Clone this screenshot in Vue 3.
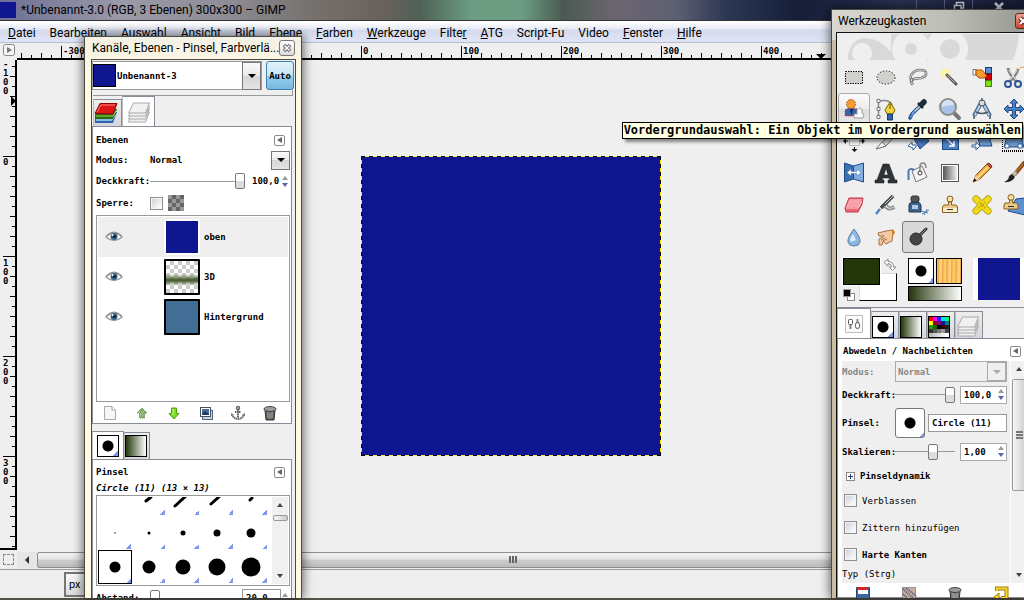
<template>
  <div class="desktop">
    <main class="image-window">
      <header class="window-title">
        <span class="window-thumb"></span>
        <h1>*Unbenannt-3.0 (RGB, 3 Ebenen) 300x300 – GIMP</h1>
        <div class="window-controls">
          <button type="button" aria-label="Minimieren"></button>
          <button type="button" aria-label="Wiederherstellen">
            <svg viewBox="0 0 12 10" width="12" height="10"><path d="M3.500 5V2.500H10.500V8H8M1.500 5.500H8V10H1.500Z" fill="none" stroke="#c8ccd6" stroke-width="1.500" /></svg>
          </button>
          <button type="button" aria-label="Schließen">
            <svg viewBox="0 0 12 10" width="12" height="10"><path d="M2 3L10 11M10 3L2 11" stroke="#c8ccd6" stroke-width="2.500" /></svg>
          </button>
        </div>
      </header>

      <nav class="menubar">
        <a v-for="item in menu" :key="item.text" href="#">{{ item.text.slice(0, item.key) }}<u>{{ item.text.slice(item.key, item.key + 1) }}</u>{{ item.text.slice(item.key + 1) }}</a>
      </nav>

      <div class="ruler-row">
        <button type="button" class="corner" aria-label="Bildmenü">
          <svg viewBox="0 0 12 12" width="12" height="12"><rect x=".5" y=".5" width="11" height="11" rx="2" fill="#f4f4f4" stroke="#888" /><path d="M4 3L9 6L4 9Z" fill="#777" /></svg>
        </button>
        <svg class="ruler-top" height="17">
          <path :d="topTicks" stroke="#000" />
          <path d="M0 16H3000" stroke="#000" stroke-width="2" />
          <path d="M799 11H809L804 16Z" />
          <text v-for="n in topLabels" :key="n" :x="n + 346" y="11">{{ n }}</text>
        </svg>
      </div>

      <div class="canvas-row">
        <svg class="ruler-left" width="17">
          <path :d="leftTicks" stroke="#000" />
          <path d="M16 0V3000" stroke="#000" stroke-width="2" />
          <path d="M11 36V46L16 41Z" />
          <template v-for="label in leftLabels" :key="label.y">
            <text v-for="(c, i) in label.chars" :key="i" x="3" :y="label.y + i * 9">{{ c }}</text>
          </template>
        </svg>
        <div class="canvas">
          <div class="picture"></div>
        </div>
      </div>

      <div class="scroll-row">
        <button type="button" class="quick-mask" aria-label="Schnellmaske"></button>
        <button type="button" class="scroll-arrow" aria-label="Nach links">
          <svg viewBox="0 0 6 8" width="6" height="8"><path d="M5 0V8L1 4Z" fill="#333" /></svg>
        </button>
        <div class="scroll-bar"><i></i><i></i><i></i></div>
      </div>
      <footer class="status">
        <select class="unit" aria-label="Einheit"><option>px</option></select>
      </footer>
    </main>

    <section class="dock layers-dock">
      <header class="dock-title">
        <h2>Kanäle, Ebenen - Pinsel, Farbverlä...</h2>
        <button type="button" class="dock-close" aria-label="Dock schließen">
          <svg viewBox="0 0 10 10" width="10" height="10"><path d="M2 2L8 8M8 2L2 8" stroke="#666" stroke-width="3.500" /><path d="M2.500 2.500L7.500 7.500M7.500 2.500L2.500 7.500" stroke="#fff" stroke-width="1.500" /></svg>
        </button>
      </header>
      <div class="dock-body">
        <div class="image-row">
          <div class="image-pick">
            <span class="image-swatch"></span>
            <select aria-label="Bild"><option>Unbenannt-3</option></select>
            <span class="drop tall"></span>
          </div>
          <button type="button" class="auto">Auto</button>
        </div>
        <div class="divider"></div>

        <div class="tabs">
          <button type="button" class="tab" aria-label="Kanäle">
            <svg viewBox="0 0 24 24" width="24" height="24">
              <path d="M1 17L5 11H23L19 22H1Z" fill="#2f62ac" /><path d="M2 18L6 14H22L18 20H2Z" fill="#8ab8e8" />
              <path d="M1 14L5 8H23L19 18H1Z" fill="#2e6d12" /><path d="M2 15H19L22 10" fill="none" stroke="#8cdc50" />
              <path d="M1 12.500L6 2.500H23L19 13Z" fill="#dd1717" stroke="#8c0505" /><path d="M3 11L7 4H21" fill="none" stroke="#ff8080" />
            </svg>
          </button>
          <button type="button" class="tab on" aria-label="Ebenen">
            <svg viewBox="0 0 24 24" width="24" height="24" v-html="layersArt"></svg>
          </button>
        </div>

        <div class="panel layers-panel">
          <div class="panel-head"><h3>Ebenen</h3><button type="button" class="tri" aria-label="Reiter konfigurieren"></button></div>
          <div class="form-row mode-row">
            <label for="layer-mode">Modus:</label>
            <select id="layer-mode"><option>Normal</option></select>
            <span class="drop"></span>
          </div>
          <div class="form-row">
            <label for="layer-opacity">Deckkraft:</label>
            <input id="layer-opacity" type="range" value="100" />
            <input class="bare" type="text" value="100,0" aria-label="Deckkraft in Prozent" />
            <span class="spin"></span>
          </div>
          <div class="form-row">
            <label for="layer-lock">Sperre:</label>
            <input id="layer-lock" type="checkbox" />
            <span class="alpha"></span>
          </div>
          <ul class="layer-list">
            <li v-for="layer in layers" :key="layer.name" :class="{ selected: layer.selected }">
              <svg viewBox="0 0 18 12" width="18" height="12">
                <path d="M1 6Q9 -2 17 6Q9 13 1 6Z" fill="#fff" stroke="#9b9b96" stroke-width="1.500" />
                <circle cx="9" cy="5.500" r="3.500" fill="#3b5f8c" /><circle cx="9.500" cy="5.500" r="1.500" fill="#101c30" /><circle cx="7.500" cy="4" r="1" fill="#fff" />
                <path d="M1 5Q9 -3 17 5" fill="none" stroke="#8b8b88" />
              </svg>
              <span :class="['thumb', layer.kind]"></span>
              <span>{{ layer.name }}</span>
            </li>
          </ul>
          <div class="actions">
            <button v-for="action in actions" :key="action.name" type="button" :aria-label="action.name">
              <svg viewBox="0 0 16 16" width="16" height="16" v-html="action.art"></svg>
            </button>
          </div>
        </div>

        <div class="tabs brush-tabs">
          <button type="button" class="tab on" aria-label="Pinsel"><span class="brush-icon"></span></button>
          <button type="button" class="tab" aria-label="Farbverläufe"><span class="gradient-icon"></span></button>
        </div>

        <div class="panel brush-panel">
          <div class="panel-head"><h3>Pinsel</h3><button type="button" class="tri" aria-label="Reiter konfigurieren"></button></div>
          <p class="brush-name">Circle (11) (13 × 13)</p>
          <div class="brush-box">
            <div class="brush-grid">
              <button v-for="(brush, i) in brushes" :key="i" type="button" :class="{ chosen: i === 10, plain: i === 0 }" :aria-label="'Pinsel ' + (i + 1)">
                <svg viewBox="0 0 34 34" width="34" height="34">
                  <path v-if="brush.line" :d="brush.line" stroke="#000" :stroke-width="brush.size" stroke-linecap="round" />
                  <circle v-else cx="17" cy="17" :r="brush.size" />
                </svg>
              </button>
            </div>
            <div class="vscroll">
              <span class="arrow-up"></span><span class="vthumb"></span><span class="arrow-down"></span>
            </div>
          </div>
          <div class="form-row spacing-row">
            <label for="spacing">Abstand:</label>
            <input id="spacing" type="range" value="0" />
            <input class="entry" type="text" value="20,0" aria-label="Abstand" />
            <span class="spin"></span>
          </div>
        </div>
      </div>
    </section>

    <section class="dock toolbox">
      <header class="dock-title">
        <h2>Werkzeugkasten</h2>
        <button type="button" class="dock-close red" aria-label="Werkzeugkasten schließen">
          <svg viewBox="0 0 10 10" width="10" height="10"><path d="M2 2L8 8M8 2L2 8" stroke="#5c2020" stroke-width="4" /><path d="M2 2L8 8M8 2L2 8" stroke="#fff" stroke-width="2" /></svg>
        </button>
      </header>
      <div class="dock-body">
        <svg class="wilber" viewBox="0 0 187 27" width="187" height="27">
          <path d="M11 27A17 20 0 0 1 29 5Q44 6 54 19V1H182Q181 15 176 27Z" fill="#d9d9d9" />
          <circle cx="25" cy="20" r="10" fill="#efefef" />
          <circle cx="74" cy="16" r="19" fill="#efefef" /><circle cx="74" cy="16" r="6" fill="#d9d9d9" />
          <circle cx="110" cy="16" r="21" fill="#efefef" /><circle cx="113" cy="16" r="10" fill="#d9d9d9" />
        </svg>
        <div class="tools">
          <button v-for="tool in tools" :key="tool.name" type="button" :class="tool.state" :aria-label="tool.name">
            <svg viewBox="0 0 24 24" width="24" height="24" v-html="tool.art"></svg>
          </button>
        </div>

        <div class="indicators">
          <div class="colors">
            <button type="button" class="background" aria-label="Hintergrundfarbe"></button>
            <button type="button" class="foreground" aria-label="Vordergrundfarbe"></button>
            <svg class="swap" viewBox="0 0 14 14" width="14" height="14"><path d="M1 4.500L5 1V3.500Q10.500 3.500 10.500 9H13L9.500 12.500L6 9H8.500Q8.500 5.500 5 5.500V8Z" fill="#fff" stroke="#888" /></svg>
            <svg class="reset" viewBox="0 0 12 12" width="12" height="12"><rect x="4.500" y="4.500" width="7" height="7" fill="#fff" stroke="#888" /><rect x=".5" y=".5" width="7" height="7" fill="#000" stroke="#999" /></svg>
          </div>
          <div class="resources">
            <button type="button" class="brush-icon" aria-label="Pinsel"></button>
            <button type="button" class="pattern" aria-label="Muster"></button>
            <button type="button" class="gradient" aria-label="Farbverlauf"></button>
          </div>
          <button type="button" class="active-image" aria-label="Aktives Bild"></button>
        </div>

        <div class="tabs tool-tabs">
          <button type="button" class="tab on" aria-label="Werkzeugeinstellungen">
            <svg viewBox="0 0 24 24" width="24" height="24"><path d="M3.500 3.500H20.500V20.500H3.500Z" fill="#fafafa" stroke="#bbb" /><rect x="6.500" y="7.500" width="4" height="5" rx="1" fill="#fff" stroke="#555" /><path d="M8.500 13V17M15.500 7V11" stroke="#888" stroke-width="2" /><rect x="13.500" y="10.500" width="4" height="6" rx="2" fill="#fff" stroke="#555" /></svg>
          </button>
          <button type="button" class="tab" aria-label="Pinsel"><span class="brush-icon"></span></button>
          <button type="button" class="tab" aria-label="Farbverläufe"><span class="gradient-icon"></span></button>
          <button type="button" class="tab" aria-label="Paletten">
            <svg viewBox="0 0 22 22" width="22" height="22">
              <rect width="22" height="22" fill="#000" />
              <rect v-for="(c, i) in palette" :key="i" :x="1 + (i % 5) * 4" :y="1 + Math.floor(i / 5) * 4" width="4" height="4" :fill="c" />
            </svg>
          </button>
          <button type="button" class="tab" aria-label="Ebenen"><svg viewBox="0 0 24 24" width="24" height="24" v-html="layersArt"></svg></button>
        </div>

        <div class="panel options-panel">
          <div class="panel-head"><h3>Abwedeln / Nachbelichten</h3><button type="button" class="tri" aria-label="Reiter konfigurieren"></button></div>
          <div class="options-area">
            <div class="options">
              <div class="opt-row">
                <label for="tool-mode" class="off">Modus:</label>
                <span class="select-wrap"><select id="tool-mode" disabled><option>Normal</option></select><span class="drop faded"></span></span>
              </div>
              <div class="opt-row">
                <label for="tool-opacity">Deckkraft:</label>
                <input id="tool-opacity" type="range" value="100" />
                <span class="entry-wrap"><input type="text" value="100,0" aria-label="Deckkraft in Prozent" /><span class="spin"></span></span>
              </div>
              <div class="opt-row big">
                <label for="tool-brush">Pinsel:</label>
                <button type="button" class="brush-button" aria-label="Pinsel wählen"></button>
                <input id="tool-brush" class="entry" type="text" value="Circle (11)" />
              </div>
              <div class="opt-row">
                <label for="tool-scale">Skalieren:</label>
                <input id="tool-scale" type="range" value="65" />
                <span class="entry-wrap"><input type="text" value="1,00" aria-label="Skalierungsfaktor" /><span class="spin"></span></span>
              </div>
              <button type="button" class="expander"><span class="plus"></span>Pinseldynamik</button>
              <label class="check-row thin"><input type="checkbox" />Verblassen</label>
              <label class="check-row thin"><input type="checkbox" />Zittern hinzufügen</label>
              <label class="check-row"><input type="checkbox" />Harte Kanten</label>
              <p class="thin">Typ (Strg)</p>
            </div>
            <div class="vscroll options-scroll">
              <span class="arrow-up"></span><span class="vthumb"><i></i><i></i><i></i></span><span class="arrow-down"></span>
            </div>
          </div>
          <div class="option-actions">
            <button v-for="action in optionActions" :key="action.name" type="button" :aria-label="action.name">
              <svg viewBox="0 0 16 16" width="16" height="16" v-html="action.art"></svg>
            </button>
          </div>
        </div>
      </div>
    </section>

    <div class="tooltip" role="tooltip">Vordergrundauswahl: Ein Objekt im Vordergrund auswählen</div>
  </div>
</template>

<script setup>
import { ref } from 'vue';

const menu = [
  { text: 'Datei', key: 0 },
  { text: 'Bearbeiten', key: 6 },
  { text: 'Auswahl', key: 0 },
  { text: 'Ansicht', key: 0 },
  { text: 'Bild', key: 0 },
  { text: 'Ebene', key: 0 },
  { text: 'Farben', key: 0 },
  { text: 'Werkzeuge', key: 0 },
  { text: 'Filter', key: 5 },
  { text: 'ATG', key: 0 },
  { text: 'Script-Fu', key: 9 },
  { text: 'Video', key: 9 },
  { text: 'Fenster', key: 0 },
  { text: 'Hilfe', key: 0 },
];

// ruler ticks every 10 units, full height on each hundred
const tickSize = (n) => (n % 100 === 0 ? 13 : n % 20 === 0 ? 6 : 4);
const topLabels = [-300, -200, -100, 0, 100, 200, 300, 400, 500];
let topTicks = '';
for (let n = -340; n <= 2000; n += 10) {
  topTicks += `M${n + 344}.5 16v-${tickSize(n)}`;
}
let leftTicks = '';
for (let n = -90; n <= 1200; n += 10) {
  leftTicks += `M16 ${n + 96}.5h-${tickSize(n)}`;
}
const leftLabels = [
  { y: 7, chars: ['-', '1', '0', '0'] },
  { y: 105, chars: ['0'] },
  { y: 206, chars: ['1', '0', '0'] },
  { y: 306, chars: ['2', '0', '0'] },
  { y: 406, chars: ['3', '0', '0'] },
];

const layers = ref([
  { name: 'oben', kind: 'blue', selected: true },
  { name: '3D', kind: 'blur', selected: false },
  { name: 'Hintergrund', kind: 'steel', selected: false },
]);

const layersArt = [17, 14, 11, 8]
  .map((y) => `<path d="M1.500 ${y + 5}L6.500 ${y - 5}H22.500L18.500 ${y + 5}Z" fill="#f1f1f1" stroke="#a9a9a9"/>`)
  .join('');

const trash = (c) => `<path d="M3 5L4 15H12L13 5Z" fill="${c}" stroke="#333"/><ellipse cx="8" cy="4" rx="6" ry="2.500" fill="#9a9d98" stroke="#444"/><path d="M6 7V13M8 8V14M10 7V13" stroke="#aaa"/>`;

const actions = [
  { name: 'Neue Ebene', art: '<path d="M2.500 1.500H10L13.500 5V14.500H2.500Z" fill="#f6f6f6" stroke="#a8a8a8"/><path d="M10 1.500V5H13.500" fill="#fff" stroke="#a8a8a8"/>' },
  { name: 'Ebene anheben', art: '<path d="M8 3L13 8H10.500V13H5.500V8H3Z" fill="#7fa966" stroke="#55803c" stroke-dasharray="1 1"/><path d="M5 7H11M6 9H10M6 11H10" stroke="#c3dcb5" stroke-dasharray="1 1"/>' },
  { name: 'Ebene absenken', art: '<path d="M8 14L13 8.500H10.500V3H5.500V8.500H3Z" fill="#7ddc2b" stroke="#4ba010"/><path d="M7 4V10" stroke="#c2f58f"/>' },
  { name: 'Ebene duplizieren', art: '<rect x="4.500" y="5.500" width="10" height="9" fill="#c9d3df" stroke="#53657c"/><rect x="2.500" y="2.500" width="10" height="9" fill="#fff" stroke="#44505f"/><rect x="4" y="4" width="7" height="6" fill="#4a6f9e"/><path d="M4 9L7 6L11 9V10H4Z" fill="#1d3a5f"/>' },
  { name: 'Ebene verankern', art: '<circle cx="8" cy="3" r="1.500" fill="none" stroke="#666" stroke-width="1.500"/><path d="M8 5V13M5 7H11M2 9Q3 13.500 8 14Q13 13.500 14 9" fill="none" stroke="#666" stroke-width="2" stroke-dasharray="1.500 .5"/><path d="M1 11V8L4 10M15 11V8L12 10" fill="#777"/>' },
  { name: 'Ebene löschen', art: trash('#5d605b') },
];

const optionActions = [
  { name: 'Einstellungen speichern', art: '<path d="M1.500 1.500H14.500V15H1.500Z" fill="#3c669f" stroke="#26456f"/><rect x="3" y="2" width="10" height="6" fill="#fff"/><rect x="3" y="1" width="10" height="3" fill="#dc2222"/>' },
  { name: 'Einstellungen laden', art: '<path d="M1.500 1.500H14.500V15H1.500Z" fill="#c6aea0" stroke="#555" stroke-dasharray="1 1"/><path d="M2 3L14 14M5 2L15 10M2 8L9 15" stroke="#557" stroke-width="2" stroke-dasharray="1 1"/>' },
  { name: 'Einstellungen löschen', art: trash('#777') },
  { name: 'Zurücksetzen', art: '<path d="M4 5V2.500H13.500V12H8" fill="none" stroke="#9c7c00" stroke-width="4"/><path d="M4 5V2.500H13.500V12H8" fill="none" stroke="#f5d731" stroke-width="2"/><path d="M1 11L6 7V15Z" fill="#f5d731" stroke="#9c7c00"/>' },
];

const brushes = [
  { size: 0 },
  { line: 'M14 19L19 15', size: 3 },
  { line: 'M9 24L21 13', size: 3 },
  { line: 'M11 22L20 14', size: 3 },
  { line: 'M16 18L18 16', size: 3 },
  { size: 0.7 },
  { size: 1.5 },
  { size: 2.5 },
  { size: 3.5 },
  { size: 4.5 },
  { size: 5.5 },
  { size: 6.5 },
  { size: 7.5 },
  { size: 8.5 },
  { size: 9.5 },
];

const palette = [
  '#ff0000', '#ff00ff', '#2020ff', '#00e0ff', '#00ff60',
  '#ffff00', '#900020', '#800080', '#101090', '#008080',
  '#20a000', '#206000', '#000000', '#300000', '#202020',
  '#303030', '#555555', '#777777', '#999999', '#444444',
  '#bbbbbb', '#cccccc', '#dddddd', '#eeeeee', '#ffffff',
];

const tools = [
  { name: 'Rechteckige Auswahl', art: '<rect x="4" y="7" width="16" height="12" fill="#cfd2cc"/><rect x="3.500" y="6.500" width="17" height="12" fill="none" stroke="#fff"/><rect x="3.500" y="6.500" width="17" height="12" fill="none" stroke="#000" stroke-dasharray="1.500 1"/>' },
  { name: 'Elliptische Auswahl', art: '<ellipse cx="12" cy="12.500" rx="9" ry="6.500" fill="#cfd2cc" stroke="#fff"/><ellipse cx="12" cy="12.500" rx="9" ry="6.500" fill="none" stroke="#000" stroke-dasharray="1.500 1.500"/>' },
  { name: 'Freie Auswahl', art: '<path d="M6 15C2 11 8 5 14 5C22 5 22 11 15 13C10 14 6 13 5 17L7 20" fill="none" stroke="#71736e" stroke-width="2.500"/><path d="M6 15C2 11 8 5 14 5C22 5 22 11 15 13C10 14 6 13 5 17L7 20" fill="none" stroke="#e0e0dc"/><circle cx="5.500" cy="15" r="1.500" fill="#ddd" stroke="#666"/>' },
  { name: 'Zauberstab', art: '<circle cx="7" cy="8" r="4.500" fill="#fff27a" opacity=".7"/><circle cx="7" cy="8" r="2" fill="#fffbd0"/><path d="M9 10L18 19" stroke="#555" stroke-width="3" stroke-linecap="round"/><path d="M9 10L17 18" stroke="#b9bdb5"/>' },
  { name: 'Nach Farbe auswählen', art: '<rect x="15.500" y="2.500" width="6" height="6" fill="#5b8fd5" stroke="#173a6b"/><rect x="15.500" y="9" width="6" height="6" fill="#d40000" stroke="#7a0000"/><rect x="15.500" y="15.500" width="6" height="6" fill="#7fe01a" stroke="#3e8208"/><path d="M3 4.500H6V10H3Z" fill="#fff" stroke="#777"/><path d="M6 5H12L17 11L14 13H9L6 10Z" fill="#f89b32" stroke="#a85400"/>' },
  { name: 'Magnetische Schere', art: '<path d="M6 3Q7 9 15 17M16 4Q15 9 7 17" fill="none" stroke="#858783" stroke-width="3"/><path d="M7 5L14 15M15 5L8 15" stroke="#eee"/><circle cx="6" cy="19" r="3" fill="none" stroke="#2e5995" stroke-width="2"/><circle cx="16" cy="19" r="3" fill="none" stroke="#2e5995" stroke-width="2"/><path d="M16 5Q16 2 24 2" fill="none" stroke="#e58000" stroke-dasharray="2 1"/>' },
  { name: 'Vordergrundauswahl', state: 'hover', art: '<path d="M3 19V13L8 10L15 12V19Z" fill="#3465a4" stroke="#c04050" stroke-dasharray="1 1"/><circle cx="9" cy="7" r="4.500" fill="#f59b35" stroke="#a34d00" stroke-dasharray="1.500 1"/><path d="M8 12L9.500 18L11 12Z" fill="#202060"/><path d="M12 21Q11 16 15 17V13Q18 9 20 13V16Q23 17 21 21Z" fill="#fafafa" stroke="#999"/>' },
  { name: 'Pfade', art: '<path d="M4.500 3V21M5 4Q16 2 18 8" fill="none" stroke="#888" stroke-width="1.500"/><path d="M3 2.500H6V5.500H3ZM3 10.500H6V13.500H3ZM3 18.500H6V21.500H3Z" fill="#fff" stroke="#777"/><path d="M16 5L21 13L19 17H13L11 13Z" fill="#f5d63f" stroke="#806000"/><path d="M16 7V12" stroke="#604800"/><path d="M13.500 17H18.500V23H13.500Z" fill="#2f65b0" stroke="#173c74"/>' },
  { name: 'Farbpipette', art: '<path d="M14 9L6 17L4 21" fill="none" stroke="#1e477b" stroke-width="3.500" stroke-linecap="round"/><path d="M14 9L6 17" stroke="#d9e6f2" stroke-width="1.500"/><path d="M9 14L4 21" stroke="#5b97dd" stroke-width="1.500"/><path d="M12 6L17 11" stroke="#222" stroke-width="2.500"/><path d="M16 7L18 5" stroke="#1e2b3b" stroke-width="5.500" stroke-linecap="round"/>' },
  { name: 'Vergrößerung', art: '<path d="M15 15L21 21" stroke="#777974" stroke-width="4" stroke-linecap="round"/><circle cx="10" cy="10" r="8" fill="#a7c4e8" stroke="#8b8e89" stroke-width="2"/><path d="M4 10A6 6 0 0 1 16 8Q10 8 4 10Z" fill="#d5e4f6"/>' },
  { name: 'Maßband', art: '<path d="M11 6L4 19M13 6L20 19" stroke="#3d5f88" stroke-width="4"/><path d="M11 6L4 20M13 6L20 20" stroke="#b9cfe6" stroke-width="2"/><circle cx="12" cy="6" r="3" fill="#d7dbe0" stroke="#4c5866"/><path d="M12 1V4M6 15Q12 18 18 15M4 18V22M20 18V22" fill="none" stroke="#4c5866" stroke-width="1.500"/>' },
  { name: 'Verschieben', art: '<path d="M12 2L16 6H13.500V10.500H18V8L22 12L18 16V13.500H13.500V18H16L12 22L8 18H10.500V13.500H6V16L2 12L6 8V10.500H10.500V6H8Z" fill="#4a82c8" stroke="#1e477b"/>' },
  { name: 'Ausrichten', art: '<path d="M7.500 5.500H17.500V16.500H7.500Z" fill="#f4f4f4" stroke="#bbb"/><path d="M1 12L4 9V11.500H6V12.500H4V15ZM23 12L20 9V11.500H18V12.500H20V15ZM12.500 23L9.500 20H12V18H13V20H15.500Z" fill="#111"/>' },
  { name: 'Zuschneiden', art: '<path d="M2 20L18 3L22 6L12 17Z" fill="#d4d6d1" stroke="#6b6e69"/><path d="M2 20L8 13L12 17Z" fill="#fff" stroke="#777"/>' },
  { name: 'Drehen', art: '<path d="M8 10L17 3L23 12L14 20Z" fill="#4679ba" stroke="#204a87"/><path d="M2 17L6 13V16H10V18L7 21V19Z" fill="#fff" stroke="#315f9e"/>' },
  { name: 'Skalieren', art: '<rect x="4.500" y="4.500" width="16" height="16" fill="#4c80c0" stroke="#204a87"/><path d="M8 9L16 17M16 12V17H11" fill="none" stroke="#fff" stroke-width="1.500"/>' },
  { name: 'Scheren', art: '<path d="M7 4H18L22 17H10Z" fill="#6c9bd0" stroke="#204a87"/><path d="M2 16H6V13L10 17L6 21V18H2Z" fill="#fff" stroke="#315f9e"/>' },
  { name: 'Perspektive', art: '<path d="M6 4H18L22 18H2Z" fill="#6c9bd0" stroke="#204a87"/><path d="M0 22H24M0 11V22" stroke="#000" stroke-width="2" stroke-dasharray="1 1"/><path d="M3 15H7V19H3ZM16 15H20V19H16Z" fill="#fff" stroke="#315f9e"/>' },
  { name: 'Spiegeln', art: '<path d="M2.500 2L11.500 5V18L2.500 21Z" fill="#3b71b2" stroke="#204a87"/><path d="M21.500 2L11.500 5V18L21.500 21Z" fill="#80addf" stroke="#204a87"/><path d="M5 11.500L9 8V10.500H15V8L19 11.500L15 15V12.500H9V15Z" fill="#fff" stroke="#5577a0" stroke-width=".5"/>' },
  { name: 'Text', art: '<path d="M9 3H15L21 19H23V22H14V19H16L15 17H9L8 19H10V22H1V19H3ZM12 7L10 14H14Z" fill="#303336" fill-rule="evenodd" stroke="#151515" stroke-width=".5"/>' },
  { name: 'Füllen', art: '<path d="M6 10L16 5L21 16L10 21Z" fill="#f4f4f4" stroke="#777"/><path d="M14 12V5Q14 2 17 2Q20 2 20 7" fill="none" stroke="#888" stroke-width="1.500"/><circle cx="14" cy="12" r="2" fill="#fff" stroke="#333"/><path d="M8 8.500Q3 7 2.500 10V19" fill="none" stroke="#4c79b6" stroke-width="2"/>' },
  { name: 'Farbverlauf', art: '<defs><linearGradient id="tool-grad"><stop stop-color="#555"/><stop offset="1" stop-color="#eee"/></linearGradient></defs><rect x="3.500" y="3.500" width="17" height="17" fill="#fff" stroke="#555"/><rect x="5" y="5" width="14" height="14" fill="url(#tool-grad)"/>' },
  { name: 'Stift', art: '<path d="M3 21L6 14L17 3L21 7L10 18Z" fill="#e9a63a" stroke="#8c5710"/><path d="M8 16L18 6" stroke="#ffd783" stroke-width="2"/><path d="M17 3L19 2L22 5L21 7Z" fill="#d34e4e" stroke="#802626"/><path d="M3 21L6 14L10 18Z" fill="#f4d3a2"/><path d="M3 21L4.500 17.500L6.500 19.500Z"/>' },
  { name: 'Pinsel', art: '<path d="M22 2L13 13" stroke="#8b4a12" stroke-width="4" stroke-linecap="round"/><path d="M21 3L13 12" stroke="#d58a45"/><path d="M14 11L10 15" stroke="#bbb" stroke-width="4"/><path d="M10 13L13 16Q10 22 2 21Q7 19 7 15Z" fill="#222"/>' },
  { name: 'Radierer', art: '<path d="M3 15L7 5H21L20 11L16 19H4Z" fill="#ef6772" stroke="#bd3947"/><path d="M4 14L7.500 6H20L16.500 14Z" fill="#f8a3a9"/><path d="M4 15H16L20 8" fill="none" stroke="#fbd0d4"/>' },
  { name: 'Sprühpistole', art: '<path d="M7 15L19 3" stroke="#42474b" stroke-width="3.500"/><path d="M11 11L20 2" stroke="#c9cdd0"/><path d="M13 11Q14 16 20 13M10 13Q14 19 21 15" fill="none" stroke="#8c9192" stroke-width="1.500"/><path d="M6 16L2 21" stroke="#4b83c3" stroke-width="2.500"/>' },
  { name: 'Tinte', art: '<path d="M3 12Q3 10 6 9H12Q15 10 15 13V19H3Z" fill="#3b6294" stroke="#26364b"/><rect x="5" y="3" width="8" height="6" rx="2" fill="#50565c" stroke="#2c3034"/><rect x="6" y="12" width="6" height="4" fill="#b5cbe4"/><path d="M15 18L22 20M18 22L21 16M16 21L23 17" stroke="#5481b7"/>' },
  { name: 'Klonen', art: '<circle cx="12" cy="6" r="3" fill="#f7dfae" stroke="#8a5f1c"/><path d="M10.500 9V12H6L4.500 14V19.500H19.500V14L18 12H13.500V9Z" fill="#ecc98a" stroke="#8a5f1c"/><path d="M5 15H19V19H5Z" fill="#fbecc8"/><path d="M9 16.500H15" stroke="#333"/>' },
  { name: 'Heilen', art: '<path d="M6 6L18 18M18 6L6 18" stroke="#a99500" stroke-width="7" stroke-linecap="round"/><path d="M6 6L18 18M18 6L6 18" stroke="#f2d91d" stroke-width="5.500" stroke-linecap="round"/><path d="M9 9L15 15M15 9L9 15" stroke="#b79f00" stroke-dasharray="1 1.500" stroke-width="2"/>' },
  { name: 'Perspektivisches Klonen', art: '<path d="M14 6L23 5V22L6 18Z" fill="#5c91d2" stroke="#204a87"/><circle cx="9" cy="4.500" r="3" fill="#f7dfae" stroke="#8a5f1c"/><path d="M7.500 7V10H3L2 12V16H16V12L15 10H10.500V7Z" fill="#ecc98a" stroke="#8a5f1c"/><path d="M6 13.500H12" stroke="#333"/>' },
  { name: 'Weichzeichnen', art: '<path d="M12 4Q19 13 18 17Q17 21 12 21Q7 21 6 17Q5 13 12 4Z" fill="#8fb5e2" stroke="#5a7ca8"/><path d="M11 9Q7 14 9 17L14 15Z" fill="#dce9f8"/>' },
  { name: 'Verschmieren', art: '<path d="M19 5L12 6L4 8L5 11L10 11L5 14L5 20L8 20L9 16L12 19L18 16Z" fill="#f1c9a3" stroke="#a9713e"/><path d="M7 15L11 13M9 16L13 14" stroke="#a9713e"/><path d="M18 4L21 7L18 13Z" fill="#d67b22"/>' },
  { name: 'Abwedeln / Nachbelichten', state: 'active', art: '<path d="M12 12L20 4" stroke="#333" stroke-width="3" stroke-linecap="round"/><path d="M13 11L20 4" stroke="#888"/><circle cx="10" cy="14" r="6" fill="#414446" stroke="#242628"/>' },
];
</script>

<style>
body {
  margin: 0;
  overflow: hidden;
}
</style>

<style scoped>
* {
  box-sizing: border-box;
}

.desktop {
  position: relative;
  height: 100vh;
  overflow: hidden;
  background: #efefef;
  color: #000;
  font: bold 9px/12px 'DejaVu Sans Mono', monospace;
}

button,
input,
select {
  margin: 0;
  padding: 0;
  border: 0;
  border-radius: 0;
  outline: none;
  background: none;
  color: inherit;
  font: inherit;
  appearance: none;
}

h1,
h2,
h3,
p,
ul {
  margin: 0;
  padding: 0;
  font: inherit;
}

svg {
  display: block;
}

/* image window */
.image-window {
  display: flex;
  flex-direction: column;
  height: 100%;
  border-bottom: 2px solid #55524a;
}

.window-title {
  display: flex;
  align-items: center;
  gap: 5px;
  height: 21px;
  flex: none;
  border-bottom: 1px solid #333;
  background: linear-gradient(90deg, #6e6f96, #9a9aa8 12%, #8f8d96 22%, #77736f 30%, #6b615c 37%, #4f6257 41%, #6c9c82 46%, #6c9c82 51%, #4a5a52 55%, #6c6570 60%, #5d6072 66%, #2b3754 71%, #161e38 78%, #27304f 88%, #161c34);
  font: 12px/18px Roboto, 'Open Sans', sans-serif;
}

.window-thumb {
  width: 16px;
  height: 16px;
  background: #0f168f;
}

.window-controls {
  display: flex;
  align-self: flex-start;
  margin-left: auto;
}

.window-controls button {
  display: flex;
  justify-content: center;
  width: 28px;
  height: 12px;
  border-left: 1px solid #596079;
}

.window-controls button:last-child {
  width: 52px;
}

.menubar {
  display: flex;
  gap: 14px;
  flex: none;
  height: 22px;
  padding: 2px 8px 0;
  border-top: 1px solid #fff;
  border-bottom: 1px solid #b9bdcc;
  background: linear-gradient(#fff, #e7eaf5 35%, #d4daed 40%, #dfe5f4);
  font: 12px/18px Roboto, 'Open Sans', sans-serif;
}

.menubar a {
  color: #000;
  text-decoration: none;
  white-space: nowrap;
}

.ruler-row {
  display: flex;
  flex: none;
  height: 17px;
  background: #efefef;
}

.corner {
  flex: none;
  width: 17px;
  padding: 1px 3px 4px;
}

.ruler-top {
  flex: 1;
  min-width: 0;
}

.canvas-row {
  display: flex;
  flex: 1;
  min-height: 0;
  overflow: hidden;
}

.ruler-left {
  flex: none;
  height: 100%;
  border-bottom: 2px solid #000;
}

.canvas {
  position: relative;
  flex: 1;
}

/* the picture lies on a free canvas */
.picture {
  position: absolute;
  left: 344px;
  top: 96px;
  width: 300px;
  height: 300px;
  background:
    repeating-linear-gradient(90deg, #000 0 4px, #f4ec60 4px 8px) top / 100% 1px no-repeat,
    repeating-linear-gradient(90deg, #000 0 4px, #f4ec60 4px 8px) bottom / 100% 1px no-repeat,
    repeating-linear-gradient(#000 0 4px, #f4ec00 4px 8px) left / 1px 100% no-repeat,
    repeating-linear-gradient(#000 0 4px, #f4ec00 4px 8px) right / 1px 100% no-repeat,
    #0f168f;
}

.scroll-row {
  display: flex;
  align-items: center;
  flex: none;
  height: 20px;
  border-bottom: 1px solid #999;
}

.quick-mask {
  width: 11px;
  height: 11px;
  margin: 0 3px;
  border: 1px dashed #888;
}

.scroll-arrow {
  display: flex;
  justify-content: center;
  align-items: center;
  width: 20px;
  height: 16px;
  background: #e6e6e6;
}

.scroll-bar {
  display: flex;
  justify-content: center;
  align-items: center;
  gap: 1px;
  flex: 1;
  height: 16px;
  margin-right: 36px;
  border: 1px solid #8e8e8e;
  border-radius: 2px;
  background: linear-gradient(#f4f4f4, #e2e2e2 45%, #cdcdcf 50%, #bcbcbe);
}

.scroll-bar i {
  width: 2px;
  height: 7px;
  background: #666;
}

.status {
  flex: none;
  height: 28px;
  padding: 2px 64px;
}

.unit {
  width: 40px;
  height: 25px;
  padding: 0 3px;
  border: 2px solid #777;
  background: linear-gradient(#fbfbfb, #dcdcdc);
  font: 11px Roboto, 'Open Sans', sans-serif;
}

/* floating docks */
.dock {
  position: absolute;
  bottom: 2px;
  display: flex;
  flex-direction: column;
  overflow: hidden;
  border: 1px solid #4b4b46;
  border-bottom: 0;
  box-shadow: 0 0 10px 1px rgba(0, 0, 0, 0.6);
}

.layers-dock {
  left: 84px;
  top: 36px;
  width: 218px;
  padding: 0 5px 0 6px;
  background: linear-gradient(#f4f1e6, #fffae2 40px);
}

.toolbox {
  right: 0;
  top: 9px;
  width: 193px;
  padding-left: 4px;
  border-right: 0;
  background: linear-gradient(90deg, #d9d7d0, #bdbdb8 60%, #9a9a94) top / 100% 30px no-repeat, #c9bda2;
}

.dock-title {
  display: flex;
  align-items: center;
  justify-content: space-between;
  flex: none;
  height: 22px;
  font: 12px/18px Roboto, 'Open Sans', sans-serif;
  white-space: nowrap;
}

.dock-title h2 {
  flex: 1;
  min-width: 0;
  padding-left: 1px;
}

.dock-close {
  display: flex;
  justify-content: center;
  align-items: center;
  flex: none;
  width: 16px;
  height: 16px;
  margin-right: 1px;
  border: 1px solid #777;
  border-radius: 3px;
  background: linear-gradient(#fff, #ddd);
}

.dock-close.red {
  margin-right: -7px;
  border-color: #6b2018;
  background: linear-gradient(#e9a090, #c84630);
}

.toolbox .dock-title h2 {
  padding-left: 2px;
}

.dock-body {
  display: flex;
  flex-direction: column;
  flex: 1;
  min-height: 0;
  overflow: hidden;
  border: 1px solid #4b4b46;
  border-bottom: 0;
  background: #efefef;
}

.toolbox .dock-body {
  border-right: 0;
  border-color: #111;
}

.layers-dock .dock-body {
  padding: 1px 1px 0 0;
}

.image-row {
  display: flex;
  gap: 4px;
  flex: none;
  height: 29px;
}

.image-pick {
  display: flex;
  align-items: center;
  flex: 1;
  min-width: 0;
  border: 1px solid #999;
  background: #fff;
}

.image-swatch {
  width: 23px;
  height: 23px;
  border: 1px solid #000;
  background: #0f168f;
}

.image-pick select {
  flex: 1;
  min-width: 0;
  padding-left: 1px;
}

/* drop-down arrow box */
.drop {
  display: flex;
  justify-content: center;
  align-items: center;
  flex: none;
  width: 19px;
  height: 19px;
  border: 1px solid #777;
  background: linear-gradient(#fafafa, #e8e8e8 50%, #d6d6d6 50%, #e4e4e4);
}

.drop::after {
  border: 4px solid transparent;
  border-top-color: #000;
  border-bottom: 0;
  content: '';
}

.drop.tall {
  height: 28px;
}

.drop.faded {
  border-color: #aaa;
  background: #efefef;
}

.drop.faded::after {
  border-top-color: #aaa;
}

.auto {
  width: 28px;
  border: 1px solid #3c7fb1;
  border-radius: 3px;
  background: linear-gradient(#e3f3fb, #c4e5f6 50%, #98d1ef 50%, #78b7dc);
}

.divider {
  flex: none;
  height: 6px;
  margin: 0 1px;
  border-right: 1px solid #999;
  border-bottom: 1px solid #999;
}

.tabs {
  display: flex;
  align-items: flex-end;
  flex: none;
  height: 30px;
  padding-left: 1px;
}

.tab {
  display: flex;
  align-items: center;
  width: 29px;
  height: 27px;
  border: 1px solid #888c96;
  border-bottom: 0;
  border-left-color: #bbb;
  background: linear-gradient(#eee, #d4d6da);
}

.tab.on {
  justify-content: center;
  width: 33px;
  height: 30px;
  background: #fff;
}

.brush-tabs {
  height: 35px;
  padding-left: 0;
}

.brush-tabs .tab {
  width: 26px;
}

.brush-tabs .tab.on {
  width: 32px;
  height: 28px;
}

.brush-icon,
.brush-button {
  display: block;
  width: 22px;
  height: 22px;
  border: 1px solid #000;
  background:
    linear-gradient(135deg, transparent 50%, #8097ee 50%) right bottom / 5px 5px no-repeat,
    radial-gradient(circle, #000 5px, transparent 6px),
    #fff;
}

.gradient-icon {
  display: block;
  width: 22px;
  height: 22px;
  border: 1px solid #000;
  background: linear-gradient(90deg, #24370b, #fff);
}

.panel {
  display: flex;
  flex-direction: column;
  border: 1px solid #888c96;
  background: #fff;
}

.layers-dock .panel {
  flex: none;
  margin-right: 2px;
  padding: 3px 1px 0 3px;
}

.panel-head {
  display: flex;
  align-items: center;
  justify-content: space-between;
  flex: none;
  height: 20px;
  padding-right: 5px;
}

.tri {
  display: flex;
  justify-content: center;
  align-items: center;
  width: 11px;
  height: 11px;
  border: 1px solid #888;
  border-radius: 2px;
}

.tri::after {
  border: 3px solid transparent;
  border-right: 5px solid #666;
  border-left: 0;
  content: '';
}

.form-row {
  display: flex;
  align-items: center;
  flex: none;
  height: 22px;
}

.form-row label {
  width: 54px;
  white-space: nowrap;
}

.mode-row {
  height: 20px;
}

.mode-row select {
  flex: 1;
}

input[type='range'] {
  flex: none;
  width: 95px;
  height: 16px;
  background: linear-gradient(#999, #999) center / 100% 1px no-repeat;
}

input[type='range']::-webkit-slider-thumb {
  width: 10px;
  height: 16px;
  border: 1px solid #777;
  border-radius: 2px;
  background: linear-gradient(#fff 50%, #ddd 50%);
  appearance: none;
}

input[type='checkbox'] {
  flex: none;
  width: 13px;
  height: 13px;
  border: 1px solid #8e8f8f;
  background: linear-gradient(135deg, #cfd3d8, #fff) center / 9px 9px no-repeat, #f4f4f4;
}

.bare {
  width: 30px;
  margin-left: 7px;
}

.spin {
  display: flex;
  flex-direction: column;
  justify-content: center;
  gap: 3px;
  width: 8px;
  height: 16px;
}

.form-row .spin {
  margin-left: auto;
}

.spin::before,
.spin::after {
  width: 0;
  border: 3px solid transparent;
  content: '';
}

.spin::before {
  border-top: 0;
  border-bottom: 4px solid #999;
}

.spin::after {
  border-top: 4px solid #5866a8;
  border-bottom: 0;
}

.alpha {
  width: 16px;
  height: 16px;
  margin-left: 5px;
  background: repeating-conic-gradient(#666 0 25%, #999 0 50%) 0 0 / 8px 8px;
}

.layer-list {
  height: 187px;
  margin-top: 1px;
  padding: 1px;
  border: 1px solid #999;
  list-style: none;
}

.layer-list li {
  display: flex;
  align-items: center;
  height: 40px;
  padding-left: 7px;
}

.layer-list .selected {
  background: #efefef;
}

.thumb {
  width: 36px;
  height: 36px;
  margin: 0 4px 0 41px;
  border: 2px solid #000;
  border-radius: 1px;
}

.thumb.blue {
  border-color: #fff;
  background: #0f168f;
}

.thumb.steel {
  background: #446d95;
}

.thumb.blur {
  background:
    linear-gradient(transparent 40%, rgba(70, 90, 40, 0.4) 48%, #4a6030 58%, #4a6030 62%, transparent 76%),
    repeating-conic-gradient(#ccc 0 25%, #fff 0 50%) 0 0 / 8px 8px;
}

.actions {
  display: flex;
  gap: 16px;
  height: 21px;
  padding: 2px 6px;
}

.brush-panel {
  min-height: 140px;
}

.brush-panel .panel-head {
  height: 18px;
}

.brush-name {
  height: 14px;
  line-height: 14px;
  font-style: italic;
}

.brush-box {
  display: flex;
  flex: none;
  height: 91px;
  padding: 1px;
  border: 1px solid #999;
}

.brush-grid {
  display: grid;
  flex: 1;
  grid-template-columns: repeat(5, 34px);
  align-content: end;
  overflow: hidden;
}

.brush-grid button {
  height: 34px;
  background: linear-gradient(135deg, transparent 50%, #8097ee 50%) right 1px bottom 1px / 5px 5px no-repeat;
}

.brush-grid .plain {
  background: none;
}

.brush-grid .chosen {
  box-shadow: inset 0 0 0 1px #000;
}

.vscroll {
  display: flex;
  flex-direction: column;
  align-items: center;
  gap: 4px;
  width: 16px;
  padding: 6px 0;
  background: #f0f0f0;
}

.arrow-up,
.arrow-down {
  width: 0;
  border: 3px solid transparent;
}

.arrow-up {
  border-top: 0;
  border-bottom: 4px solid #444;
}

.arrow-down {
  margin-top: auto;
  border-top: 4px solid #444;
  border-bottom: 0;
}

.vthumb {
  width: 15px;
  height: 6px;
  margin-top: 4px;
  border: 1px solid #999;
  border-radius: 2px;
  background: linear-gradient(90deg, #f6f6f6, #ccc);
}

.spacing-row {
  height: 24px;
}

.spacing-row input[type='range'] {
  width: 86px;
}

.entry {
  border: 1px solid #999;
  background: #fff;
}

.spacing-row .entry {
  width: 39px;
  height: 18px;
  margin-left: 6px;
  padding-left: 3px;
}

/* toolbox */
.wilber {
  flex: none;
}

.tools {
  display: grid;
  flex: none;
  grid-template-columns: repeat(6, 32px);
  grid-auto-rows: 32px;
  padding: 1px 1px 2px;
}

.tools button {
  display: flex;
  justify-content: center;
  align-items: center;
}

.tools .hover {
  border: 1px solid #aaa;
  border-radius: 3px;
  background: linear-gradient(#fbfbfb, #ececec 50%, #dedede 50%, #e8e8e8);
}

.tools .active {
  border: 1px solid #777;
  border-radius: 3px;
  background: #d9d9d9;
}

.indicators {
  display: flex;
  gap: 11px;
  flex: none;
  height: 52px;
  padding: 3px 6px 0;
}

.colors {
  position: relative;
  flex: none;
  width: 54px;
  height: 43px;
}

/* overlapping colour swatches */
.background,
.foreground,
.swap,
.reset {
  position: absolute;
}

.background {
  right: 0;
  bottom: 0;
  width: 38px;
  height: 28px;
  border: 1px solid #000;
  border-top-color: #ddd;
  border-left-color: #ddd;
  background: #fff;
}

.foreground {
  left: 0;
  top: 0;
  width: 37px;
  height: 27px;
  border: 1px solid #000;
  box-shadow: 0 0 0 1px #fff;
  background: #24370b;
}

.swap {
  right: 0;
  top: 0;
}

.reset {
  left: 0;
  bottom: 0;
}

.resources {
  display: grid;
  flex: none;
  grid-template-columns: 26px 26px;
  grid-template-rows: 26px 15px;
  gap: 2px;
}

.resources button {
  width: auto;
  height: auto;
  border: 1px solid #000;
}

.pattern {
  background: repeating-linear-gradient(91deg, #f6b14e 0 2px, #fcd07a 3px 5px, #e89b3c 6px, #ffc765 7px 9px);
}

.resources .gradient {
  grid-column: span 2;
  background: linear-gradient(90deg, #24370b, #fff);
}

.active-image {
  flex: none;
  width: 52px;
  height: 42px;
  border: solid #fff;
  border-width: 0 5px;
  background: #0f168f;
}

.tool-tabs {
  height: 31px;
  padding-left: 0;
  border-top: 1px solid #888c96;
}

.tool-tabs .tab {
  align-items: flex-end;
  flex: none;
  width: 28px;
}

.tool-tabs .tab.on {
  align-items: center;
  width: 34px;
  height: 30px;
}

.options-panel {
  flex: 1;
  width: 192px;
  min-height: 0;
}

.options-panel .panel-head {
  height: 22px;
  padding: 2px 7px 0 5px;
}

.options-area {
  display: flex;
  flex: none;
  gap: 1px;
  height: 222px;
  padding-left: 4px;
}

.options {
  flex: none;
  width: 168px;
  padding-right: 3px;
  background: #efefef;
}

.opt-row {
  display: flex;
  align-items: center;
  height: 21px;
}

.opt-row + .opt-row {
  margin-top: 2px;
}

.opt-row.big {
  height: 32px;
}

.opt-row label {
  flex: none;
  width: 53px;
  white-space: nowrap;
}

.opt-row .off,
.opt-row select {
  color: #888;
  opacity: 1;
}

.opt-row input[type='range'] {
  width: 60px;
}

.select-wrap {
  display: flex;
  align-items: center;
  width: 113px;
  height: 21px;
  margin-left: auto;
  border: 1px solid #aaa;
}

.select-wrap select {
  flex: 1;
  padding-left: 2px;
}

.entry-wrap {
  display: flex;
  align-items: center;
  width: 47px;
  height: 18px;
  margin-left: auto;
  border: 1px solid #aaa;
  background: #fff;
}

.entry-wrap input {
  flex: 1;
  min-width: 0;
  padding-left: 3px;
}

.brush-button {
  width: 30px;
  height: 30px;
  border-color: #777;
  border-radius: 3px;
}

.opt-row .entry {
  width: 79px;
  height: 18px;
  margin-left: auto;
  padding-left: 3px;
}

.expander {
  display: flex;
  align-items: center;
  gap: 5px;
  height: 22px;
  margin-top: 3px;
  padding-left: 4px;
}

.plus {
  width: 9px;
  height: 9px;
  border: 1px solid #888;
  background:
    linear-gradient(#2a4070, #2a4070) center / 5px 1px no-repeat,
    linear-gradient(#2a4070, #2a4070) center / 1px 5px no-repeat,
    #fff;
}

.check-row {
  display: flex;
  align-items: center;
  gap: 5px;
  height: 27px;
  padding-left: 2px;
}

.thin {
  font-weight: normal;
}

.options-scroll {
  gap: 2px;
}

.options-scroll .vthumb {
  display: flex;
  flex-direction: column;
  justify-content: center;
  align-items: center;
  gap: 1px;
  height: 112px;
  margin-top: 6px;
}

.vthumb i {
  width: 7px;
  height: 2px;
  background: #777;
}

.option-actions {
  display: flex;
  gap: 30px;
  flex: none;
  padding: 3px 17px;
}

.tooltip {
  position: absolute;
  right: 1px;
  top: 122px;
  height: 17px;
  padding: 0 1px;
  border: 1px solid #000;
  background: #ffffe1;
  box-shadow: 3px 3px 3px rgba(0, 0, 0, 0.45);
  font-size: 12px;
  line-height: 15px;
  white-space: nowrap;
}

.ruler-row text,
.canvas-row text {
  font: bold 9px 'DejaVu Sans Mono', monospace;
}
</style>
